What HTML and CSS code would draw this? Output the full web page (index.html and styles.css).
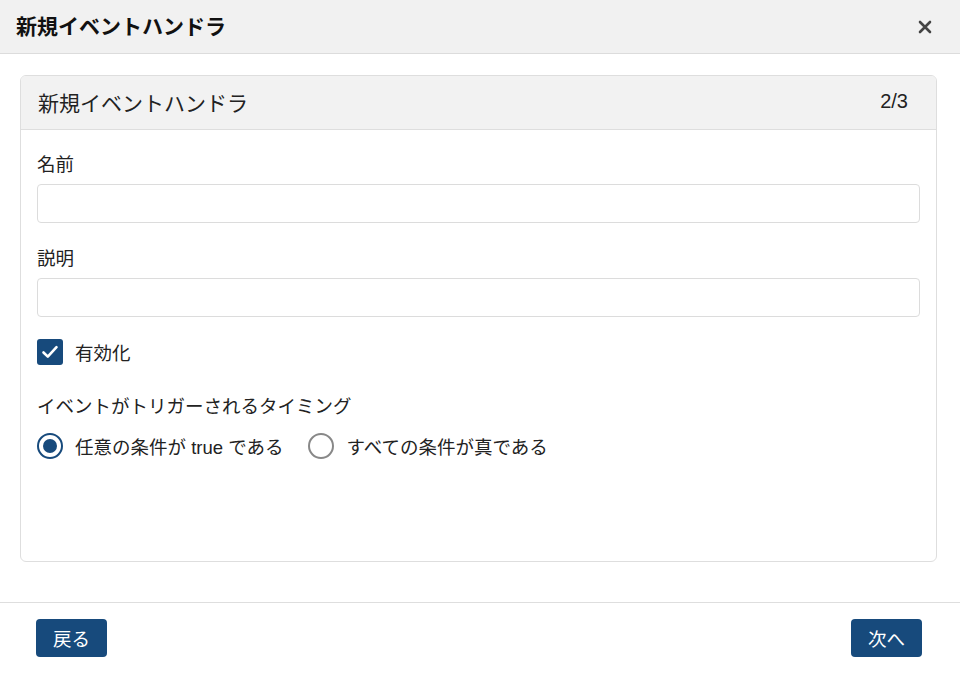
FILE: index.html
```html
<!DOCTYPE html>
<html lang="ja">
<head>
<meta charset="utf-8">
<link rel="stylesheet" href="styles.css">
</head>
<body>
<div class="dialog">
  <header class="dlg-head">
    <h1 class="dlg-title">新規イベントハンドラ</h1>
    <button class="close" aria-label="close">
      <svg width="14" height="14" viewBox="0 0 14 14"><path d="M2 2L12 12M12 2L2 12" stroke="#444" stroke-width="2.6" stroke-linecap="round"/></svg>
    </button>
  </header>
  <main class="dlg-body">
    <section class="card">
      <div class="card-head">
        <span class="card-title">新規イベントハンドラ</span>
        <span class="step">2/3</span>
      </div>
      <div class="card-body">
        <div class="field">
          <label class="lbl">名前</label>
          <input class="inp" type="text">
        </div>
        <div class="field">
          <label class="lbl">説明</label>
          <input class="inp" type="text">
        </div>
        <div class="check-row">
          <span class="cbox"><svg width="20" height="20" viewBox="0 0 20 20"><path d="M3.5 10.5L7.8 14.6L16.5 5.2" fill="none" stroke="#fff" stroke-width="2.6" stroke-linecap="round" stroke-linejoin="round"/></svg></span>
          <span class="check-label">有効化</span>
        </div>
        <div class="lbl timing">イベントがトリガーされるタイミング</div>
        <div class="radios">
          <span class="radio-item"><span class="radio on"></span><span>任意の条件が true である</span></span>
          <span class="radio-item"><span class="radio"></span><span>すべての条件が真である</span></span>
        </div>
      </div>
    </section>
  </main>
  <footer class="dlg-foot">
    <button class="btn">戻る</button>
    <button class="btn">次へ</button>
  </footer>
</div>
</body>
</html>
```
FILE: styles.css
```css
* { box-sizing: border-box; }
html, body { margin: 0; padding: 0; background: #fff; }
body {
  font-family: "Liberation Sans", "Noto Sans CJK JP", sans-serif;
  color: #222;
  width: 960px;
  height: 673px;
  overflow: hidden;
}
.dialog { display: flex; flex-direction: column; height: 673px; }
.dlg-head {
  height: 54px;
  background: #f1f1f1;
  border-bottom: 1px solid #dcdcdc;
  display: flex;
  align-items: center;
  justify-content: space-between;
  padding: 0 28px 3px 16px;
}
.dlg-title { margin: 0; font-size: 21px; font-weight: bold; color: #111; }
.close { border: 0; background: none; padding: 0; display: flex; margin-top: 3px; }
.dlg-body { flex: 1; padding: 21px 23px 0 20px; }
.card {
  border: 1px solid #dedede;
  border-radius: 6px;
  height: 487px;
  overflow: hidden;
}
.card-head {
  height: 54px;
  background: #f2f2f2;
  border-bottom: 1px solid #dedede;
  display: flex;
  align-items: center;
  justify-content: space-between;
  padding: 0 28px 2px 17px;
  font-size: 21px;
  color: #222;
}
.step { font-size: 20px; }
.card-body { padding: 21px 16px 0 16px; }
.lbl { display: block; font-size: 18.5px; line-height: 27px; color: #222; }
.field { margin-bottom: 22px; }
.field .lbl { margin-bottom: 6px; }
.inp {
  display: block;
  width: 100%;
  height: 39px;
  border: 1px solid #dcdcdc;
  border-radius: 4px;
  background: #fff;
}
.check-row { display: flex; align-items: center; gap: 12px; height: 26px; margin-top: 1px; }
.cbox {
  width: 26px; height: 26px;
  background: #174a7c;
  border-radius: 3px;
  display: flex; align-items: center; justify-content: center;
}
.check-label { font-size: 18.5px; }
.timing { margin-top: 28px; }
.radios { display: flex; align-items: center; gap: 25px; margin-top: 13px; font-size: 18.5px; }
.radio-item { display: flex; align-items: center; gap: 12px; }
.radio {
  width: 26px; height: 26px;
  border-radius: 50%;
  border: 2px solid #888;
  display: flex; align-items: center; justify-content: center;
}
.radio.on { border-color: #174a7c; }
.radio.on::after {
  content: "";
  width: 14px; height: 14px;
  border-radius: 50%;
  background: #174a7c;
}
.dlg-foot {
  border-top: 1px solid #dedede;
  height: 71px;
  display: flex;
  align-items: flex-start;
  justify-content: space-between;
  padding: 16px 38px 0 36px;
}
.btn {
  height: 38px;
  width: 71px;
  border: 0;
  border-radius: 4px;
  background: #174a7c;
  color: #fff;
  font-family: inherit;
  font-size: 18.5px;
}
```
